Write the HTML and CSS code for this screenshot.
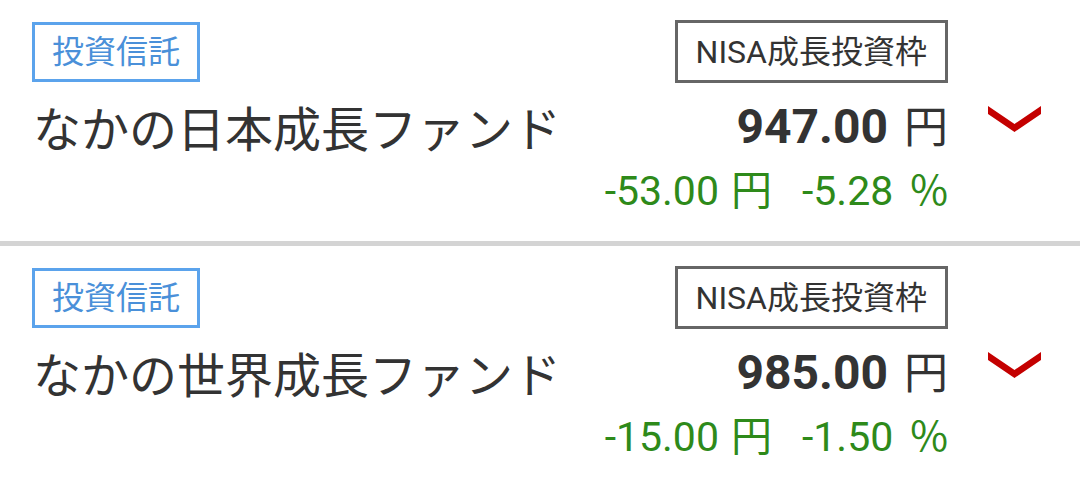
FILE: index.html
```html
<!DOCTYPE html>
<html lang="ja">
<head>
    <meta charset="UTF-8">
    <meta name="viewport" content="width=device-width, initial-scale=1.0">
    <title>保有ファンド</title>
    <link rel="stylesheet" href="styles.css">
</head>
<body>
    <div class="list">
        <div class="item">
            <div class="main">
                <div class="tags">
                    <span class="tag type">投資信託</span>
                    <span class="tag account">NISA成長投資枠</span>
                </div>
                <div class="mid">
                    <span class="name">なかの日本成長ファンド</span>
                    <span class="price"><b>947.00</b><span class="unit">円</span></span>
                </div>
                <div class="change">
                    <span>-53.00<span class="unit">円</span></span>
                    <span>-5.28<span class="unit pct">%</span></span>
                </div>
            </div>
            <div class="toggle">
                <svg width="53" height="26" viewBox="0 0 53 26"><polygon points="0,0 26.5,18 53,0 53,8 26.5,26 0,8" fill="#c40000"/></svg>
            </div>
        </div>
        <div class="item">
            <div class="main">
                <div class="tags">
                    <span class="tag type">投資信託</span>
                    <span class="tag account">NISA成長投資枠</span>
                </div>
                <div class="mid">
                    <span class="name">なかの世界成長ファンド</span>
                    <span class="price"><b>985.00</b><span class="unit">円</span></span>
                </div>
                <div class="change">
                    <span>-15.00<span class="unit">円</span></span>
                    <span>-1.50<span class="unit pct">%</span></span>
                </div>
            </div>
            <div class="toggle">
                <svg width="53" height="26" viewBox="0 0 53 26"><polygon points="0,0 26.5,18 53,0 53,8 26.5,26 0,8" fill="#c40000"/></svg>
            </div>
        </div>
    </div>
</body>
</html>
```

FILE: styles.css
```css
body {
    margin: 0;
    background-color: #fff;
    font-family: Roboto, "Noto Sans CJK JP", sans-serif;
    color: #333;
}

.item {
    display: flex;
    align-items: flex-start;
    padding: 20px 39px 0 32px;
    height: 221px;
    border-bottom: 5px solid #d4d4d4;
}

.main {
    flex: 1;
}

.tags {
    display: flex;
    justify-content: space-between;
    align-items: flex-start;
}

.tag {
    box-sizing: border-box;
    font-size: 32px;
    line-height: 1;
}

.tag.type {
    margin-top: 2px;
    height: 60px;
    padding: 11px 17px;
    border: 3px solid #5ba3ec;
    color: #4a90d9;
}

.tag.account {
    height: 63px;
    padding: 13px 18px;
    border: 3px solid #666;
    color: #333;
}

.mid {
    display: flex;
    justify-content: space-between;
    align-items: center;
    margin-top: 8px;
}

.name {
    font-family: "Noto Sans CJK JP", sans-serif;
    font-size: 48px;
    line-height: 66px;
    margin-left: 1px;
}

.price {
    font-size: 44px;
    line-height: 66px;
}

.price b {
    font-size: 48px;
    font-weight: 700;
}

.unit {
    font-family: "Noto Sans CJK JP", sans-serif;
    margin-left: 16px;
}

.change {
    display: flex;
    justify-content: flex-end;
    gap: 30px;
    margin-top: -2px;
    font-size: 41px;
    line-height: 56px;
    color: #2e8a1a;
}

.change .unit {
    margin-left: 12px;
}

.change .unit.pct {
    margin-left: 17px;
}

.toggle {
    margin-left: 40px;
    padding-top: 86px;
}
```
